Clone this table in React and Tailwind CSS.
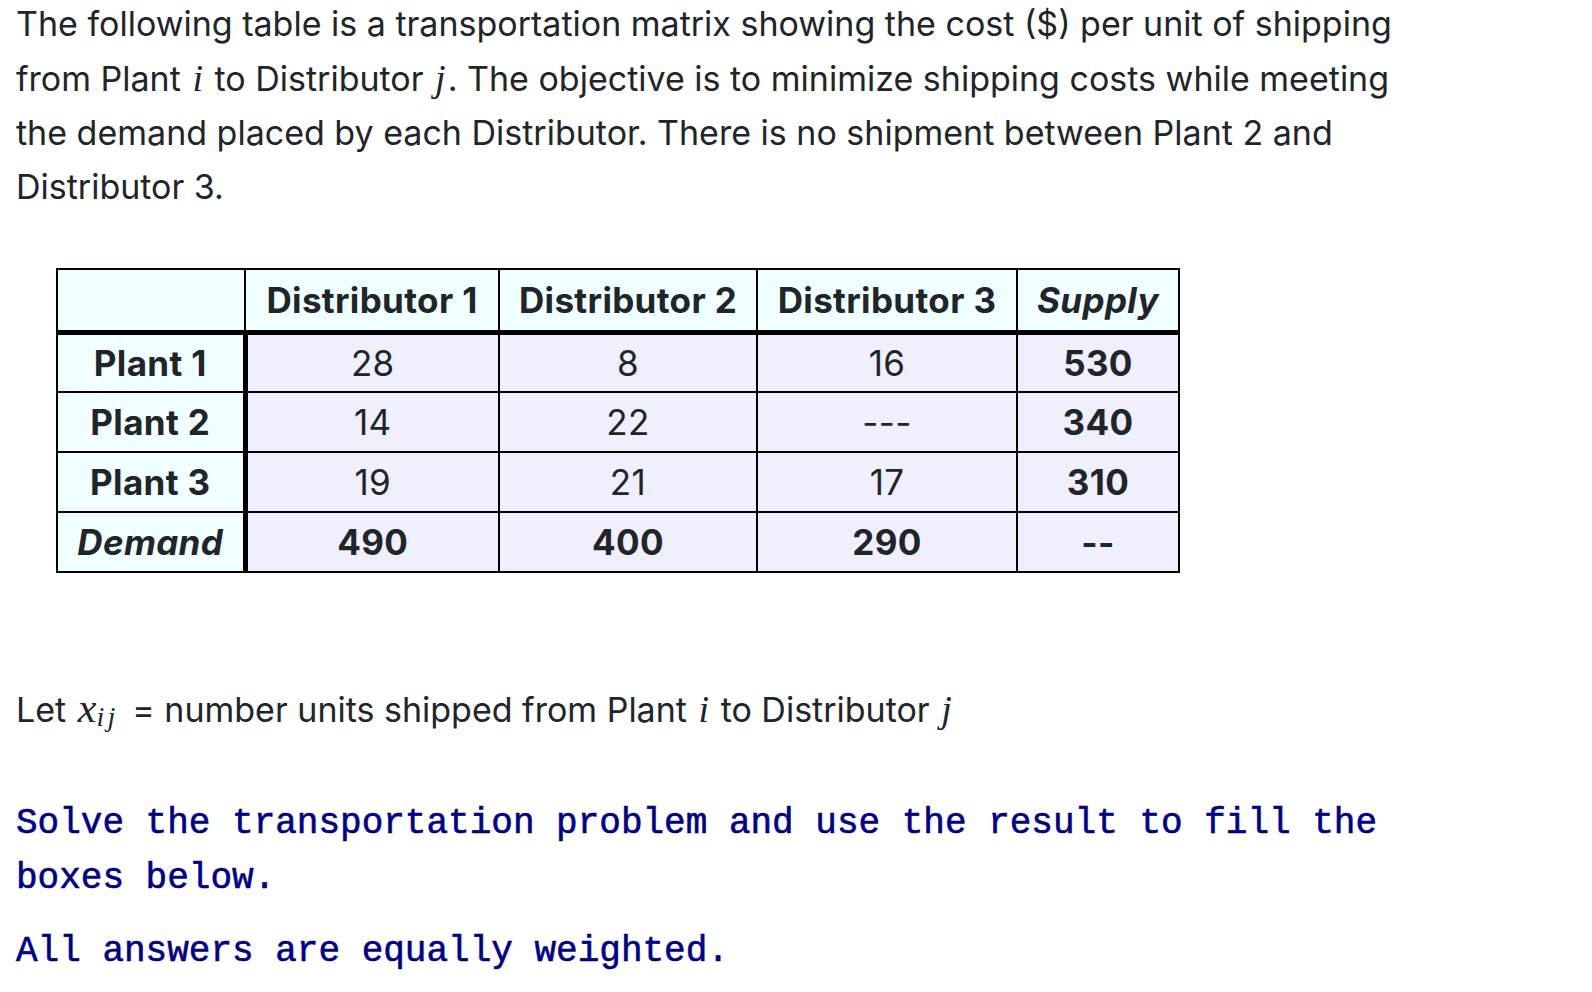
import * as React from "react";

const rows = [
  { name: "Plant 1", costs: ["28", "8", "16"], supply: "530" },
  { name: "Plant 2", costs: ["14", "22", "---"], supply: "340" },
  { name: "Plant 3", costs: ["19", "21", "17"], supply: "310" },
];

const demand = ["490", "400", "290"];

const M = ({ children }) => (
  <span className="font-['Liberation_Serif',serif] italic text-[38px] mx-[2px]">{children}</span>
);

const App = () => {
  return (
    <main className="min-h-screen bg-white font-['Inter',sans-serif] text-[#212529] pl-[16px] pt-0">
      {/* Intro */}
      <p className="text-[34px] leading-[54px] -mt-[3px] whitespace-nowrap">
        The following table is a transportation matrix showing the cost ($) per unit of shipping
        <br />
        from Plant <M>i</M> to Distributor <M>j</M>. The objective is to minimize shipping costs while meeting
        <br />
        the demand placed by each Distributor. There is no shipment between Plant 2 and
        <br />
        Distributor 3.
      </p>

      {/* Cost matrix */}
      <table className="mt-[54px] ml-[40px] border-collapse table-fixed w-[1124px] text-[35px] tracking-[0.01em] text-center">
        <colgroup>
          <col className="w-[188px]" />
          <col className="w-[254px]" />
          <col className="w-[258px]" />
          <col className="w-[260px]" />
          <col className="w-[162px]" />
        </colgroup>
        <thead>
          <tr className="h-[63px] bg-[#f0ffff]">
            <th className="border-2 border-black border-b-[5px]"></th>
            <th className="border-2 border-black border-b-[5px] font-bold">Distributor 1</th>
            <th className="border-2 border-black border-b-[5px] font-bold">Distributor 2</th>
            <th className="border-2 border-black border-b-[5px] font-bold">Distributor 3</th>
            <th className="border-2 border-black border-b-[5px] font-bold italic">Supply</th>
          </tr>
        </thead>
        <tbody>
          {rows.map((r) => (
            <tr key={r.name} className="h-[60px]">
              <td className="border-2 border-black border-r-[5px] bg-[#f0ffff] font-bold">{r.name}</td>
              {r.costs.map((c, i) => (
                <td key={i} className="border-2 border-black bg-[#efeffd]">
                  {c}
                </td>
              ))}
              <td className="border-2 border-black bg-[#efeffd] font-bold">{r.supply}</td>
            </tr>
          ))}
          <tr className="h-[60px]">
            <td className="border-2 border-black border-r-[5px] bg-[#f0ffff] font-bold italic">Demand</td>
            {demand.map((d, i) => (
              <td key={i} className="border-2 border-black bg-[#efeffd] font-bold">
                {d}
              </td>
            ))}
            <td className="border-2 border-black bg-[#efeffd] font-bold">--</td>
          </tr>
        </tbody>
      </table>

      {/* Variable definition */}
      <p className="mt-[109px] text-[34px] leading-[54px] whitespace-nowrap">
        Let <span className="font-['Liberation_Serif',serif] italic text-[42px] leading-none ml-[2px]">x</span>
        <sub className="font-['Liberation_Serif',serif] italic text-[28px] leading-none tracking-[0.12em] relative top-[4px] mr-[4px]">ij</sub> = number units
        shipped from Plant <M>i</M> to Distributor{" "}
        <span className="font-['Liberation_Serif',serif] italic text-[38px] leading-none ml-[2px] mr-[6px]">j</span>
      </p>

      {/* Instructions */}
      <div className="mt-[59px] font-['Liberation_Mono',monospace] text-[36px] leading-[55px] text-[#000088] [-webkit-text-stroke:0.6px_#000088]">
        <p>
          Solve the transportation problem and use the result to fill the
          <br />
          boxes below.
        </p>
        <p className="mt-[18px]">All answers are equally weighted.</p>
      </div>
    </main>
  );
};

export default App;
